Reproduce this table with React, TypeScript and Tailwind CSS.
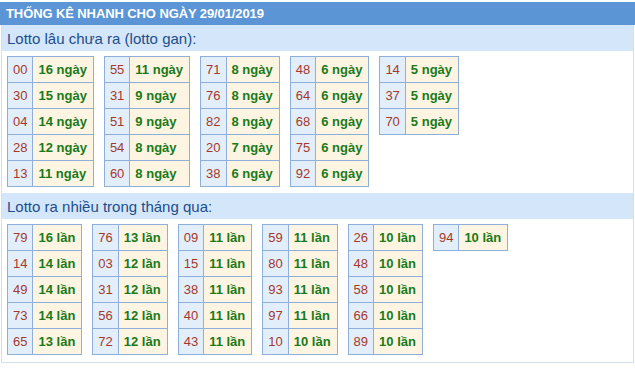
import React from 'react';

type Row = [string, string];

const ganTables: Row[][] = [
  [['00', '16 ngày'], ['30', '15 ngày'], ['04', '14 ngày'], ['28', '12 ngày'], ['13', '11 ngày']],
  [['55', '11 ngày'], ['31', '9 ngày'], ['51', '9 ngày'], ['54', '8 ngày'], ['60', '8 ngày']],
  [['71', '8 ngày'], ['76', '8 ngày'], ['82', '8 ngày'], ['20', '7 ngày'], ['38', '6 ngày']],
  [['48', '6 ngày'], ['64', '6 ngày'], ['68', '6 ngày'], ['75', '6 ngày'], ['92', '6 ngày']],
  [['14', '5 ngày'], ['37', '5 ngày'], ['70', '5 ngày']],
];

const nhieuTables: Row[][] = [
  [['79', '16 lần'], ['14', '14 lần'], ['49', '14 lần'], ['73', '14 lần'], ['65', '13 lần']],
  [['76', '13 lần'], ['03', '12 lần'], ['31', '12 lần'], ['56', '12 lần'], ['72', '12 lần']],
  [['09', '11 lần'], ['15', '11 lần'], ['38', '11 lần'], ['40', '11 lần'], ['43', '11 lần']],
  [['59', '11 lần'], ['80', '11 lần'], ['93', '11 lần'], ['97', '11 lần'], ['10', '10 lần']],
  [['26', '10 lần'], ['48', '10 lần'], ['58', '10 lần'], ['66', '10 lần'], ['89', '10 lần']],
  [['94', '10 lần']],
];

function LottoTable({ rows }: { rows: Row[] }) {
  return (
    <table className="border-collapse border border-[#8fafdb]">
      <tbody>
        {rows.map(([num, count]) => (
          <tr key={num} className="h-[26px]">
            <td className="border border-[#8fafdb] bg-[#e3eefb] px-[5px] text-center text-[13px] text-[#a3392a]">
              {num}
            </td>
            <td className="border border-[#8fafdb] bg-[#fef4e2] pl-[5px] pr-[6px] text-[13px] font-bold text-[#1a7a1a] whitespace-nowrap">
              {count}
            </td>
          </tr>
        ))}
      </tbody>
    </table>
  );
}

function Section({ title, tables }: { title: string; tables: Row[][] }) {
  return (
    <div>
      <div className="flex h-[26px] items-center bg-[#d4e7fa] pl-[5px] text-[15px] text-[#1c4d8c]">
        {title}
      </div>
      <div className="flex items-start gap-[10px] px-[5px] pb-[6px] pt-[5px]">
        {tables.map((t, i) => (
          <LottoTable key={i} rows={t} />
        ))}
      </div>
    </div>
  );
}

export default function App() {
  return (
    <div className="w-[635px] bg-white pt-[2px] font-['Liberation_Sans',Arial,sans-serif] leading-none">
      {/* Header */}
      <div className="flex h-[23px] items-center bg-[#5b95d5] pl-[6px] text-[13px] font-bold tracking-[-0.1px] text-white">
        THỐNG KÊ NHANH CHO NGÀY 29/01/2019
      </div>

      <div className="mx-[1px] border-x border-b border-[#d3dfee] pb-[1px]">
        <Section title="Lotto lâu chưa ra (lotto gan):" tables={ganTables} />
        <Section title="Lotto ra nhiều trong tháng qua:" tables={nhieuTables} />
      </div>
    </div>
  );
}
